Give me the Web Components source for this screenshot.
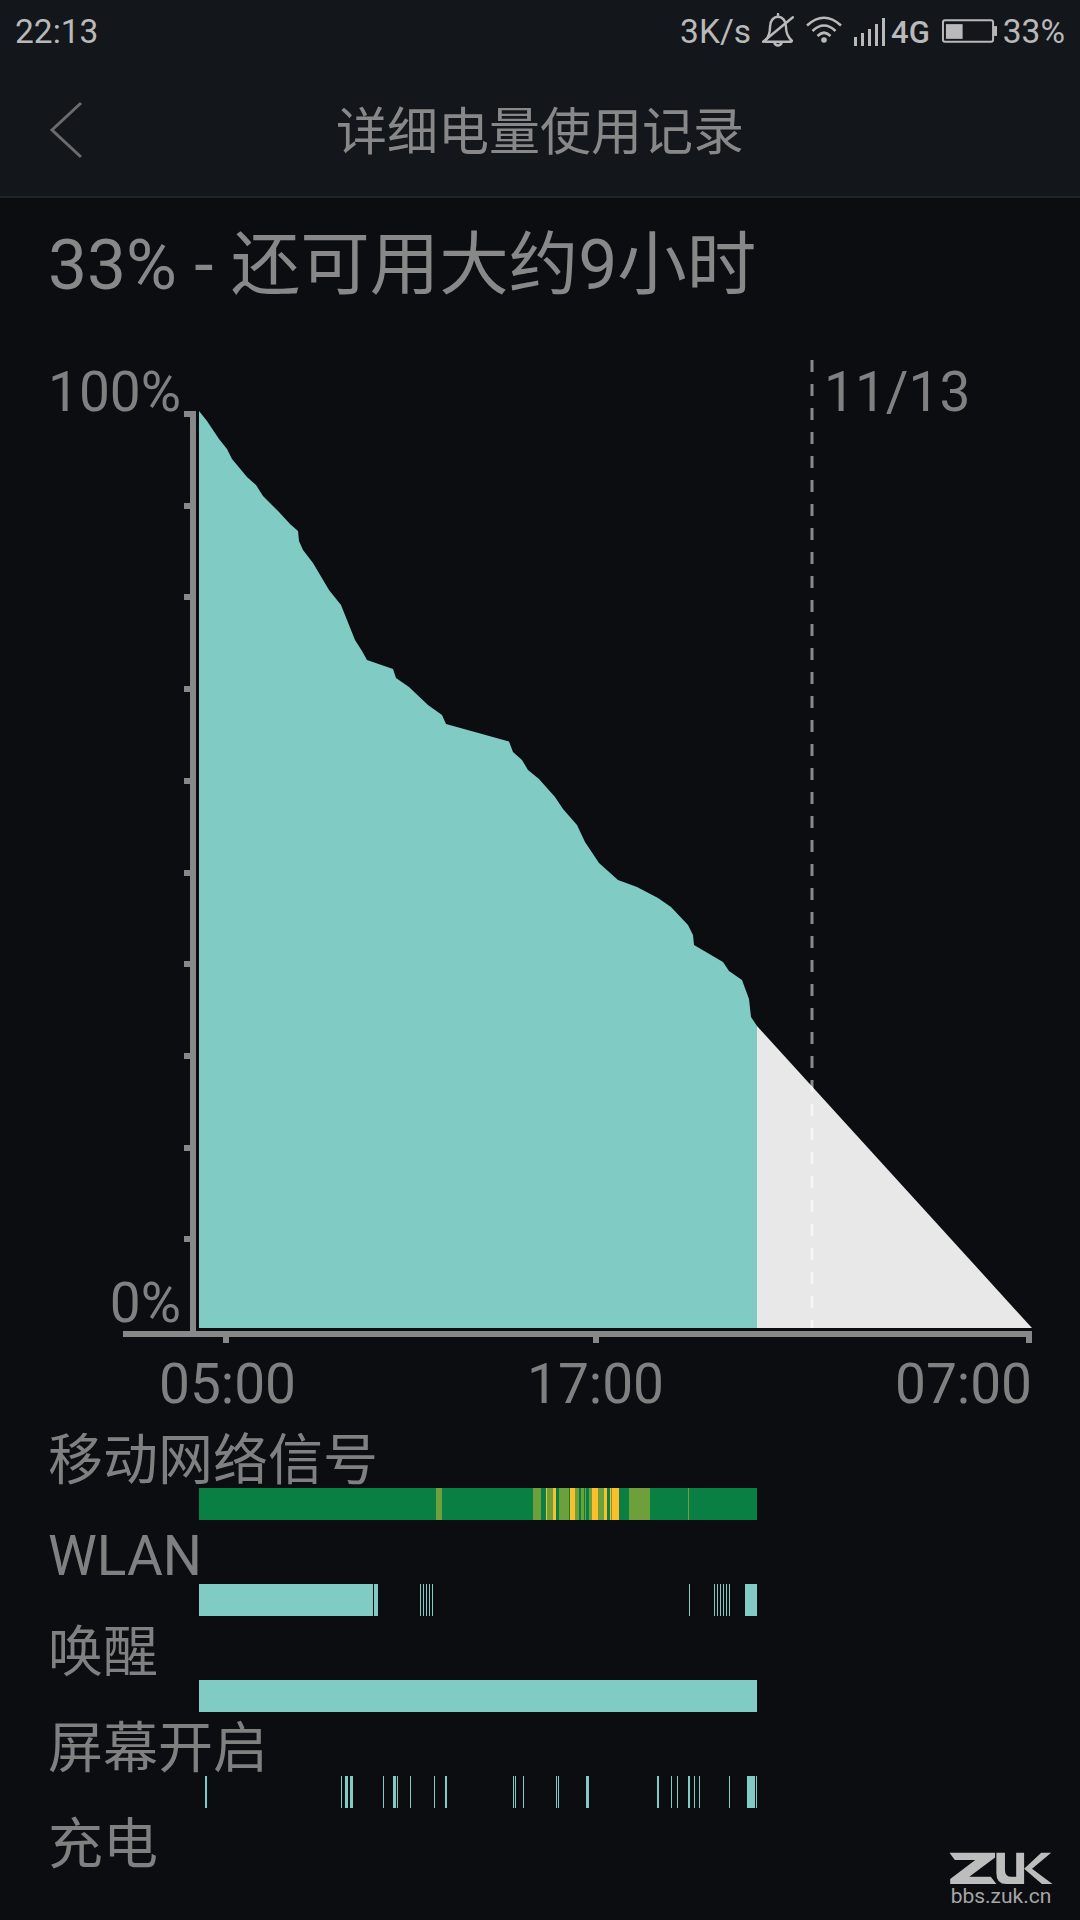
<!DOCTYPE html>
<html lang="zh">
<head>
<meta charset="utf-8">
<title>详细电量使用记录</title>
<style>
  html, body { margin: 0; padding: 0; background: #0b0d11; }
  body { width: 1080px; height: 1920px; overflow: hidden; position: relative;
    font-family: Roboto, "Noto Sans CJK SC", sans-serif; }
</style>
</head>
<body>
<status-bar></status-bar>
<app-bar>详细电量使用记录</app-bar>
<battery-headline>33% - 还可用大约9小时</battery-headline>
<battery-chart></battery-chart>
<usage-row base="#0a7f43"
  segments="436-442:#6d9f3b 533-541:#6d9f3b 546-547:#fdbe2c 547-553:#6d9f3b 553-556:#fdbe2c 559-569:#6d9f3b 570-575:#fdbe2c 575-579:#6d9f3b 581-584:#6d9f3b 585-586:#6d9f3b 589-592:#6d9f3b 592-598:#fdbe2c 598-604:#6d9f3b 604-607:#fdbe2c 610-611:#fdbe2c 611-612:#6d9f3b 612-619:#fdbe2c 629-650:#6d9f3b 688-689:#6d9f3b">移动网络信号</usage-row>
<usage-row segments="199-373 374-378 420-421 423-424 426-427 429-430 432-433 689-690 714-715 717-718 720-721 723-724 726-727 729-730 745-757">WLAN</usage-row>
<usage-row segments="199-757">唤醒</usage-row>
<usage-row segments="205-207 341-342 345-348 350-353 383-384 393-396 397-398 410-411 434-435 445-447 513-514 515-516 523-524 556-557 558-559 586-589 657-659 671-672 677-678 688-690 694-695 699-700 729-730 747-755 756-757">屏幕开启</usage-row>
<usage-row>充电</usage-row>
<zuk-mark></zuk-mark>

<script>
const SANS = `Roboto, "Noto Sans CJK SC", sans-serif`;

class StatusBar extends HTMLElement {
  constructor() {
    super();
    const shadow = this.attachShadow({ mode: "open" });
    shadow.innerHTML = `
    <style>
      :host { display: flex; align-items: center; justify-content: space-between;
        height: 64px; padding: 0 15px 2px 15px; box-sizing: content-box;
        width: 1050px; background: #13161b; color: #b9b9b9;
        font: 33.500px/1 ${SANS}; }
      .right { display: flex; align-items: center; }
      svg { display: block; }
      .bell { margin: -5px 0 0 11px; }
      .wifi { margin: -5px 0 0 12px; }
      .signal { margin: -1px 0 0 12px; }
      .net { margin-left: 6px; font-weight: 500; font-size: 31px; }
      .battery { margin: -2px 0 0 12px; }
      .pct { margin-left: 6px; }
    </style>
    <span>22:13</span>
    <div class="right">
      <span>3K/s</span>
      <svg class="bell" width="32" height="34" viewBox="0 0 30 32" fill="none" stroke="#b9b9b9" stroke-width="2.300">
        <path d="M3 26C7 22 7.500 18 7.500 13C7.500 7 11 3.500 15 3.500C19 3.500 22.500 7 22.500 13C22.500 18 24 22.500 28 26C28 27 27 27 26 27H4C3 27 2 27 3 26Z"/>
        <path d="M11.500 28A3.700 3.700 0 0 0 18.500 28"/>
        <path d="M29 4L1 27" stroke-linecap="round"/>
        <path d="M15 1V3.500" stroke-linecap="round"/>
      </svg>
      <svg class="wifi" width="36" height="27" viewBox="0 0 36 27" fill="none" stroke="#b9b9b9" stroke-width="2.600">
        <path d="M1 9.500Q18 -6 35 9.500"/>
        <path d="M6.500 15Q18 4 29.500 15"/>
        <path d="M11.500 20Q18 13.500 24.500 20"/>
        <circle cx="18" cy="24" r="2.800" fill="#b9b9b9" stroke="none"/>
      </svg>
      <svg class="signal" width="31" height="28" viewBox="0 0 31 28" fill="#b9b9b9">
        <rect x="0" y="19" width="3" height="9"/>
        <rect x="7" y="15" width="3" height="13"/>
        <rect x="14" y="11" width="3" height="17"/>
        <rect x="21" y="6" width="3" height="22"/>
        <rect x="28" y="0" width="3" height="28"/>
      </svg>
      <span class="net">4G</span>
      <svg class="battery" width="55" height="24" viewBox="0 0 56 24">
        <rect x="1" y="1" width="51" height="22" rx="2" fill="none" stroke="#b9b9b9" stroke-width="2"/>
        <rect x="4" y="5" width="17" height="15" fill="#b9b9b9"/>
        <rect x="53" y="7" width="3" height="10" fill="#b9b9b9"/>
      </svg>
      <span class="pct">33%</span>
    </div>`;
  }
}

class AppBar extends HTMLElement {
  constructor() {
    super();
    const shadow = this.attachShadow({ mode: "open" });
    shadow.innerHTML = `
    <style>
      :host { display: flex; align-items: center; justify-content: center; position: relative;
        height: 130px; background: #13161b; border-bottom: 2px solid #1f2226;
        color: #888; font: 51px/1 ${SANS}; }
      svg { position: absolute; left: 49px; top: 35px; }
      .label { margin-top: 3px; }
    </style>
    <svg width="34" height="58" viewBox="0 0 34 58" fill="none" stroke="#6b6b6b" stroke-width="3">
      <path d="M32 2L3 29L32 56" />
    </svg>
    <span class="label"><slot></slot></span>`;
  }
}

class BatteryHeadline extends HTMLElement {
  constructor() {
    super();
    const shadow = this.attachShadow({ mode: "open" });
    shadow.innerHTML = `
    <style>
      :host { display: block; height: 154px; padding-left: 48px; color: #888;
        font: 69.500px/136px ${SANS}; }
    </style>
    <slot></slot>`;
  }
}

// outline of the measured battery curve, in page coordinates
const CURVE = "199,411 207,421 219,439 227,449 232,459 247,477 256,485 263,496 279,512 290,524 298,531 299,541 303,550 313,563 329,590 341,605 355,640 362,651 367,660 393,669 396,678 409,687 428,705 442,715 446,724 509,741.500 513,752 522,760 528,770 539,779 555,797 563,809 577,825 585,842 599,863 618,880 637,887 658,898 671,907 688,925 693,935 694,945 723,962 729,971 742,980 749,999 751,1017 757,1026";

class BatteryChart extends HTMLElement {
  constructor() {
    super();
    const shadow = this.attachShadow({ mode: "open" });
    let ticks = "";
    for (let i = 0; i < 10; i++) {
      ticks += `<rect x="184" y="${Math.round(411 + 91.7 * i)}" width="6" height="6"/>`;
    }
    shadow.innerHTML = `
    <style>
      :host { display: block; position: relative; height: 1072px; color: #808080;
        font: 55px/1 ${SANS}; }
      svg { display: block; }
      .y { position: absolute; right: 899px; }
      .top { top: 13px; }
      .bottom { top: 924px; }
      .date { position: absolute; left: 824px; top: 13px; }
      .hours { display: flex; justify-content: space-between; height: 79px; line-height: 79px;
        padding: 0 48px 0 159px; }
    </style>
    <svg width="1080" height="993" viewBox="0 352 1080 993">
      <line x1="812" y1="360" x2="812" y2="1328" stroke="#8a8a8a" stroke-width="3" stroke-dasharray="12 12"/>
      <clipPath id="rest"><polygon points="757,1026 1032,1328 757,1328"/></clipPath>
      <polygon points="757,1026 1032,1328 757,1328" fill="#e8e8e8"/>
      <line x1="812" y1="360" x2="812" y2="1328" stroke="#f5f5f5" stroke-width="3" stroke-dasharray="12 12" clip-path="url(#rest)"/>
      <polygon points="${CURVE} 757,1328 199,1328" fill="#80cbc4"/>
      <g fill="#888" shape-rendering="crispEdges">
        <rect x="190" y="411" width="6" height="926"/>
        <rect x="123" y="1331" width="909" height="6"/>
        ${ticks}
        <rect x="223" y="1337" width="6" height="6"/>
        <rect x="593" y="1337" width="6" height="6"/>
        <rect x="1026" y="1337" width="6" height="6"/>
      </g>
    </svg>
    <span class="y top">100%</span>
    <span class="y bottom">0%</span>
    <span class="date">11/13</span>
    <div class="hours"><span>05:00</span><span>17:00</span><span>07:00</span></div>`;
  }
}

class UsageRow extends HTMLElement {
  constructor() {
    super();
    const shadow = this.attachShadow({ mode: "open" });
    const base = this.getAttribute("base");
    const parts = (this.getAttribute("segments") || "").split(" ").filter(Boolean);
    const rects = parts.map((part) => {
      const [range, colour] = part.split(":");
      const [from, to] = range.split("-").map(Number);
      return `<rect x="${from}" y="0" width="${to - from}" height="32" fill="${colour || "#80cbc4"}"/>`;
    }).join("");
    shadow.innerHTML = `
    <style>
      :host { display: block; height: 96px; color: #808080; font: 55px/64px ${SANS}; }
      .label { height: 60px; padding: 4px 0 0 48px; white-space: nowrap; }
      svg { display: block; margin-left: 199px; }
    </style>
    <div class="label"><slot></slot></div>
    <svg width="558" height="32" viewBox="199 0 558 32" shape-rendering="crispEdges">
      ${base ? `<rect x="199" y="0" width="558" height="32" fill="${base}"/>` : ""}
      ${rects}
    </svg>`;
  }
}

class ZukMark extends HTMLElement {
  constructor() {
    super();
    const shadow = this.attachShadow({ mode: "open" });
    shadow.innerHTML = `
    <style>
      :host { position: absolute; left: 948px; top: 1852px; width: 106px;
        display: flex; flex-direction: column; align-items: center;
        color: #a6a6a6; font: 21px/22px Roboto, sans-serif; }
      svg { display: block; }
    </style>
    <svg width="104" height="33" viewBox="90 95 312 100" fill="#bdbdbd">
      <path d="M90 97H228V112L150 170H215L232 192H92V177L168 119H106Z"/>
      <path d="M232 97H258V150Q258 170 278 170H292V97H316V192H262Q232 192 232 160Z"/>
      <path d="M316 146L368 97H398L340 146L402 192H370Z"/>
    </svg>
    <span>bbs.zuk.cn</span>`;
  }
}

window.customElements.define("status-bar", StatusBar);
window.customElements.define("app-bar", AppBar);
window.customElements.define("battery-headline", BatteryHeadline);
window.customElements.define("battery-chart", BatteryChart);
window.customElements.define("usage-row", UsageRow);
window.customElements.define("zuk-mark", ZukMark);
</script>
</body>
</html>
